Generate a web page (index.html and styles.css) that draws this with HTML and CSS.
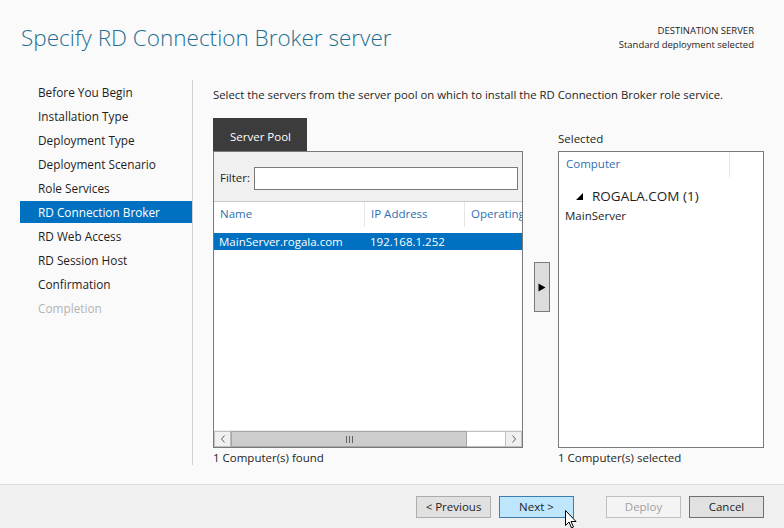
FILE: index.html
```html
<!DOCTYPE html>
<html>
<head>
<meta charset="utf-8">
<link rel="stylesheet" href="styles.css">
</head>
<body>
<div class="window">
  <header class="top">
    <h1 class="title">Specify RD Connection Broker server</h1>
    <div class="dest">
      <div>DESTINATION SERVER</div>
      <div>Standard deployment selected</div>
    </div>
  </header>
  <div class="body">
    <nav class="nav">
      <div class="nav-item">Before You Begin</div>
      <div class="nav-item">Installation Type</div>
      <div class="nav-item">Deployment Type</div>
      <div class="nav-item">Deployment Scenario</div>
      <div class="nav-item">Role Services</div>
      <div class="nav-item active">RD Connection Broker</div>
      <div class="nav-item">RD Web Access</div>
      <div class="nav-item">RD Session Host</div>
      <div class="nav-item">Confirmation</div>
      <div class="nav-item disabled">Completion</div>
    </nav>
    <main class="main">
      <p class="intro">Select the servers from the server pool on which to install the RD Connection Broker role service.</p>
      <div class="pools">
        <section class="pool">
          <div class="tab">Server Pool</div>
          <div class="box">
            <div class="filter">
              <span class="filter-label">Filter:</span>
              <div class="filter-input"></div>
            </div>
            <div class="thead">
              <div class="th c1">Name</div>
              <div class="th c2">IP Address</div>
              <div class="th c3">Operating</div>
            </div>
            <div class="rows">
              <div class="row sel">
                <div class="td c1">MainServer.rogala.com</div>
                <div class="td c2">192.168.1.252</div>
              </div>
            </div>
            <div class="hscroll">
              <div class="sb-btn">
                <svg width="6" height="8" viewBox="0 0 6 8"><path d="M4.5 0.5 L1.5 4 L4.5 7.5" fill="none" stroke="#606060" stroke-width="1"/></svg>
              </div>
              <div class="sb-thumb">
                <svg width="9" height="7" viewBox="0 0 9 7"><path d="M1.5 0 V7 M4.5 0 V7 M7.5 0 V7" stroke="#606060" stroke-width="1"/></svg>
              </div>
              <div class="sb-track"></div>
              <div class="sb-btn">
                <svg width="6" height="8" viewBox="0 0 6 8"><path d="M1.5 0.5 L4.5 4 L1.5 7.5" fill="none" stroke="#606060" stroke-width="1"/></svg>
              </div>
            </div>
          </div>
          <div class="status">1 Computer(s) found</div>
        </section>
        <div class="mover">
          <div class="move-btn">
            <svg width="8" height="9" viewBox="0 0 8 9"><path d="M0.5 0.5 L7.5 4.5 L0.5 8.5 Z" fill="#000"/></svg>
          </div>
        </div>
        <section class="selected">
          <div class="sel-label">Selected</div>
          <div class="box sel-box">
            <div class="sel-head">
              <div class="th comp">Computer</div>
              <div class="th rest"></div>
            </div>
            <div class="group">
              <svg class="tri" width="7" height="7" viewBox="0 0 7 7"><path d="M7 0 L7 7 L0 7 Z" fill="#000"/></svg>
              <span>ROGALA.COM (1)</span>
            </div>
            <div class="member">MainServer</div>
          </div>
          <div class="status">1 Computer(s) selected</div>
        </section>
      </div>
    </main>
  </div>
  <footer class="footer">
    <button class="btn">&lt; Previous</button>
    <button class="btn next">Next &gt;</button>
    <button class="btn off">Deploy</button>
    <button class="btn cancel">Cancel</button>
  </footer>
  <svg class="cursor" width="12" height="19" viewBox="0 0 12 19"><path d="M0.5 0.5 L0.5 15.5 L4 12 L6.5 18 L8.5 17 L6 11.5 L11 11.5 Z" fill="#fff" stroke="#000" stroke-width="1" stroke-linejoin="round"/></svg>
</div>
</body>
</html>
```

FILE: styles.css
```css
* { box-sizing: border-box; }
html, body {
  margin: 0;
  padding: 0;
  background: #fafafa;
  width: 784px;
  height: 528px;
  overflow: hidden;
}
body {
  font-family: "Open Sans", "Noto Sans", "DejaVu Sans", sans-serif;
  font-size: 11.5px;
  color: #1e1e1e;
}
.window {
  position: relative;
  width: 784px;
  height: 528px;
  display: flex;
  flex-direction: column;
}
.top {
  height: 80px;
  display: flex;
  justify-content: space-between;
  align-items: flex-start;
  padding: 0 30px 0 21px;
}
.title {
  margin: 24px 0 0 0;
  font-weight: 300;
  font-size: 22.5px;
  line-height: 28px;
  color: #1f6f92;
  letter-spacing: 0;
}
.dest {
  margin-top: 24px;
  text-align: right;
  font-size: 9.5px;
  line-height: 14px;
  color: #1e1e1e;
}
.body {
  flex: 1;
  display: flex;
}
.nav {
  width: 193px;
  height: 385px;
  padding-left: 20px;
  border-right: 1px solid #d3d3d3;
}
.nav-item {
  height: 24px;
  line-height: 25px;
  padding-left: 18px;
  font-size: 11.8px;
  color: #1e1e1e;
}
.nav-item.active {
  background: #0070c0;
  color: #fff;
  height: 22px;
  line-height: 23px;
  margin: 1px 0;
}
.nav-item.disabled { color: #b4b4b4; }
.main {
  flex: 1;
  padding-left: 20px;
}
.intro {
  margin: 7px 0 0 0;
  line-height: 16px;
  font-size: 11.35px;
}
.pools {
  display: flex;
  margin-top: 15px;
}
.pool {
  width: 310px;
  display: flex;
  flex-direction: column;
}
.tab {
  width: 94px;
  height: 33px;
  background: #3c3c3c;
  color: #fff;
  line-height: 37px;
  padding-left: 17px;
  font-size: 11.5px;
}
.box {
  border: 1px solid #7a7a7a;
  background: #fff;
  height: 297px;
  display: flex;
  flex-direction: column;
}
.filter {
  height: 50px;
  background: #f0f0f0;
  border-bottom: 1px solid #c8c8c8;
  display: flex;
  align-items: center;
  padding: 0 4px 0 6px;
}
.filter-label { width: 34px; margin-top: 2px; }
.filter-input {
  flex: 1;
  height: 23px;
  background: #fff;
  border: 1px solid #7a7a7a;
  margin-top: 3px;
}
.thead {
  height: 25px;
  display: flex;
}
.th {
  color: #2e6fb0;
  line-height: 24px;
  padding-left: 6px;
  white-space: nowrap;
  overflow: hidden;
  font-size: 11.5px;
}
.c1 { width: 150px; }
.c2 { width: 100px; border-left: 1px solid #e6e6e6; }
.c3 { flex: 1; border-left: 1px solid #e6e6e6; }
.rows {
  flex: 1;
  padding-top: 6px;
}
.row {
  height: 17px;
  display: flex;
  line-height: 17px;
}
.row.sel { background: #0070c0; color: #fff; }
.td { padding-left: 5px; white-space: nowrap; }
.row .c2 { border-left: none; padding-left: 6px; }
.hscroll {
  height: 17px;
  display: flex;
  background: #f0f0f0;
  border-top: 1px solid #f0f0f0;
}
.sb-btn {
  width: 17px;
  display: flex;
  align-items: center;
  justify-content: center;
  border: 1px solid #bfbfbf;
  background: #f0f0f0;
}
.sb-thumb {
  width: 236px;
  background: #cdcdcd;
  border: 1px solid #a6a6a6;
  display: flex;
  align-items: center;
  justify-content: center;
}
.sb-track {
  flex: 1;
  background: #fff;
  border-top: 1px solid #bfbfbf;
  border-bottom: 1px solid #bfbfbf;
}
.status {
  margin-top: 3px;
  line-height: 14px;
  font-size: 11.5px;
}
.mover {
  width: 35px;
  padding: 144px 0 0 11px;
}
.move-btn {
  width: 16px;
  height: 50px;
  background: #dcdcdc;
  border: 1px solid #7a7a7a;
  display: flex;
  align-items: center;
  justify-content: center;
}
.selected {
  width: 206px;
  display: flex;
  flex-direction: column;
}
.sel-label {
  height: 33px;
  line-height: 20px;
  padding-top: 11px;
}
.sel-head {
  height: 25px;
  display: flex;
}
.comp { width: 170px; padding-left: 7px; }
.rest { flex: 1; border-left: 1px solid #e6e6e6; }
.group {
  display: flex;
  align-items: center;
  margin-top: 9px;
  height: 20px;
  padding-left: 17px;
  font-size: 13.5px;
}
.tri { margin-right: 9px; margin-top: 1px; }
.member {
  padding-left: 6px;
  line-height: 16px;
  margin-top: 2px;
}
.footer {
  height: 44px;
  background: #f0f0f0;
  border-top: 1px solid #dedede;
  display: flex;
  align-items: flex-start;
  padding: 11px 0 0 416px;
  gap: 8px;
}
.btn {
  font-family: inherit;
  font-size: 11.5px;
  width: 75px;
  height: 22px;
  padding: 0;
  background: #e1e1e1;
  border: 1px solid #adadad;
  color: #1e1e1e;
  line-height: 20px;
}
.btn.next {
  background: #bee6fd;
  border-color: #3c7fb1;
}
.btn.off {
  margin-left: 24px;
  background: #f4f4f4;
  border-color: #bfbfbf;
  color: #a0a0a0;
}
.btn.cancel {
  border-color: #707070;
}
.cursor {
  position: absolute;
  left: 565px;
  top: 510px;
}
```
